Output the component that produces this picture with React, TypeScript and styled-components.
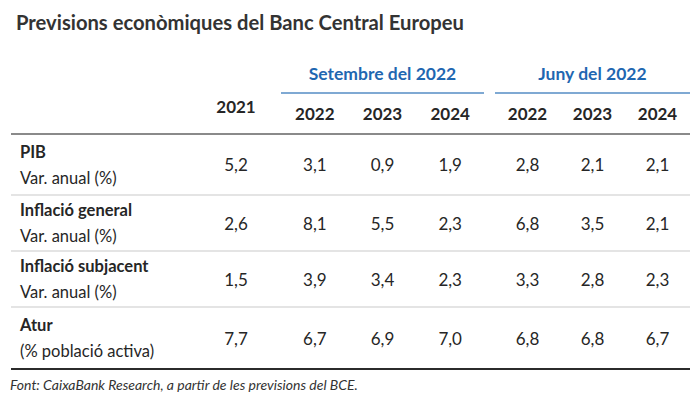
import styled, { createGlobalStyle } from "styled-components"

const TEXT = "#262626"
const BLUE = "#1f67b1"
const BLUE_LINE = "#7fa9d3"

const GlobalStyle = createGlobalStyle`
    html, body {
        margin: 0;
        padding: 0;
        background: #ffffff;
    }
    body {
        width: 700px;
        height: 404px;
        overflow: hidden;
        font-family: Lato, "Liberation Sans", sans-serif;
        color: ${TEXT};
    }
`

const Page = styled.div`
    display: flex;
    flex-direction: column;
    width: 700px;
`

const Title = styled.h1`
    margin: 7px 0 0 16px;
    font-size: 20.2px;
    line-height: 30px;
    font-weight: 700;
    color: #333333;
`

const Table = styled.div`
    display: flex;
    flex-direction: column;
    width: 679px;
    margin: 18px 0 0 11px;
`

const Row = styled.div<{ $h: number; $line: string }>`
    display: flex;
    align-items: stretch;
    box-sizing: border-box;
    height: ${p => p.$h}px;
    border-bottom: 2px solid ${p => p.$line};
`

const LabelCell = styled.div`
    width: 194px;
    padding-left: 9px;
    box-sizing: border-box;
    display: flex;
    flex-direction: column;
    justify-content: center;
`

const LabelMain = styled.span`
    font-size: 16.5px;
    font-weight: 700;
    line-height: 26px;
`

const LabelSub = styled.span`
    font-size: 16.5px;
    line-height: 26px;
`

const YearCell = styled.div<{ $bold?: boolean }>`
    width: 62px;
    display: flex;
    align-items: center;
    justify-content: center;
    font-size: 17px;
    font-weight: ${p => (p.$bold ? 700 : 400)};
`

const HeadYear = styled(YearCell)`
    align-self: flex-end;
    padding-bottom: 17px;
    line-height: 18px;
`

const Group = styled.div<{ $w: number; $gap: number }>`
    width: ${p => p.$w}px;
    margin-left: ${p => p.$gap}px;
    display: flex;
    flex-direction: column;
`

const GroupTitle = styled.div`
    box-sizing: border-box;
    height: 39px;
    border-bottom: 2px solid ${BLUE_LINE};
    display: flex;
    align-items: center;
    justify-content: center;
    color: ${BLUE};
    font-size: 17.5px;
    font-weight: 700;
`

const Cells = styled.div`
    flex: 1;
    display: flex;
`

const Cell = styled.div<{ $bold?: boolean }>`
    flex: 1;
    display: flex;
    align-items: center;
    justify-content: center;
    font-size: 17px;
    font-weight: ${p => (p.$bold ? 700 : 400)};
`

const Note = styled.p`
    margin: 6px 0 0 10px;
    font-size: 14px;
    line-height: 18px;
    font-style: italic;
    color: #333333;
`

const GROUPS = [
    { title: "Setembre del 2022", w: 203, gap: 14 },
    { title: "Juny del 2022", w: 195, gap: 11 },
]

const YEARS = ["2022", "2023", "2024"]

const ROWS = [
    { name: "PIB", sub: "Var. anual (%)", h: 61, v2021: "5,2", values: [["3,1", "0,9", "1,9"], ["2,8", "2,1", "2,1"]] },
    { name: "Inflació general", sub: "Var. anual (%)", h: 56, v2021: "2,6", values: [["8,1", "5,5", "2,3"], ["6,8", "3,5", "2,1"]] },
    { name: "Inflació subjacent", sub: "Var. anual (%)", h: 56, v2021: "1,5", values: [["3,9", "3,4", "2,3"], ["3,3", "2,8", "2,3"]] },
    { name: "Atur", sub: "(% població activa)", h: 62, v2021: "7,7", values: [["6,7", "6,9", "7,0"], ["6,8", "6,8", "6,7"]] },
]

const App = () => {
    return (
    <>
        <GlobalStyle />
        <Page>
            <Title>Previsions econòmiques del Banc Central Europeu</Title>
            <Table>
                <Row $h={80} $line="#8a8a8a">
                    <LabelCell />
                    <HeadYear $bold>2021</HeadYear>
                    {GROUPS.map(g => (
                        <Group key={g.title} $w={g.w} $gap={g.gap}>
                            <GroupTitle>{g.title}</GroupTitle>
                            <Cells>
                                {YEARS.map(y => <Cell key={y} $bold>{y}</Cell>)}
                            </Cells>
                        </Group>
                    ))}
                </Row>
                {ROWS.map((r, i) => (
                    <Row key={r.name} $h={r.h} $line={i === ROWS.length - 1 ? "#2b2b2b" : "#e4e4e4"}>
                        <LabelCell>
                            <LabelMain>{r.name}</LabelMain>
                            <LabelSub>{r.sub}</LabelSub>
                        </LabelCell>
                        <YearCell>{r.v2021}</YearCell>
                        {GROUPS.map((g, gi) => (
                            <Group key={g.title} $w={g.w} $gap={g.gap}>
                                <Cells>
                                    {r.values[gi].map((v, vi) => <Cell key={vi}>{v}</Cell>)}
                                </Cells>
                            </Group>
                        ))}
                    </Row>
                ))}
            </Table>
            <Note>Font: CaixaBank Research, a partir de les previsions del BCE.</Note>
        </Page>
    </>)
}

export default App
